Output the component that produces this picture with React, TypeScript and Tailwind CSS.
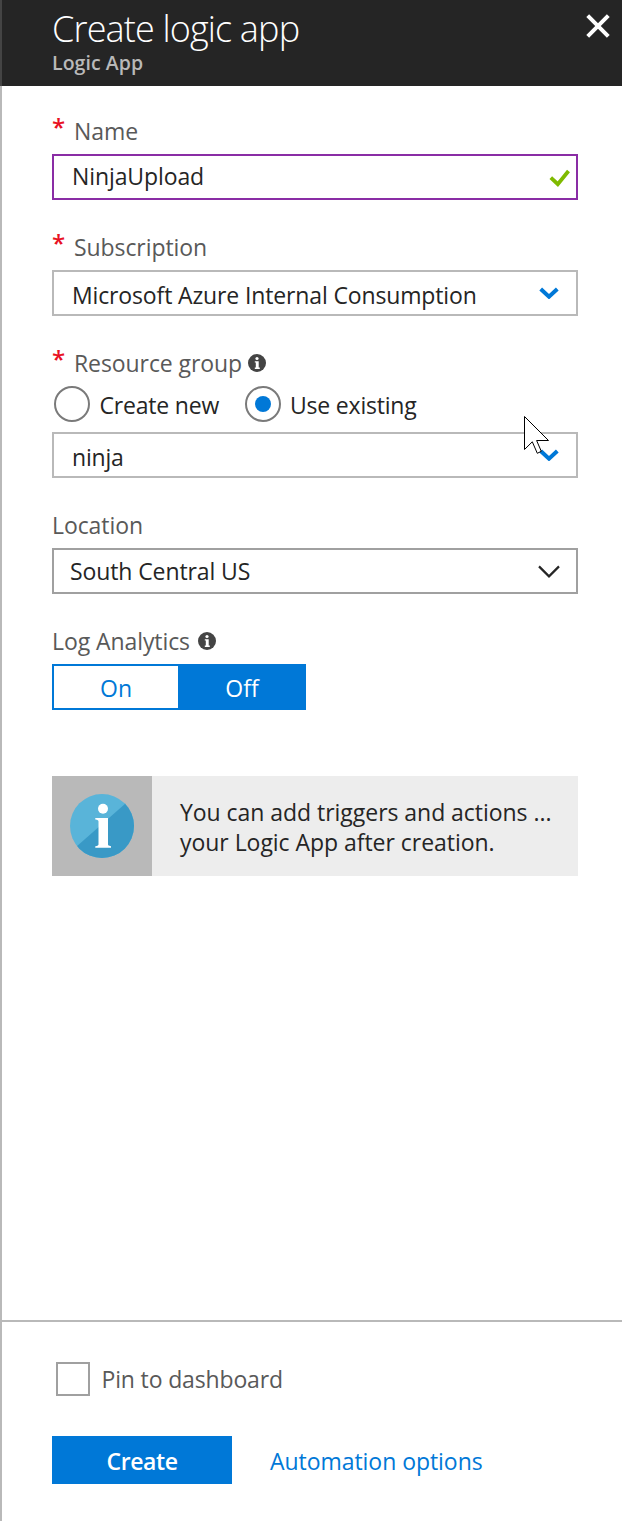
import type { ReactNode } from "react";

function Label({ children, required = false, info = false }: { children: ReactNode; required?: boolean; info?: boolean }) {
  return (
    <div className="mb-2 flex h-[30px] items-center text-[#595959]">
      {required && (
        <span className="w-[22px] shrink-0 pb-[9px] text-[24px] font-semibold leading-[30px] text-[#e81123]">*</span>
      )}
      <span className="whitespace-nowrap tracking-[-0.08px]">{children}</span>
      {info && <InfoDot wide={!required} />}
    </div>
  );
}

function InfoDot({ wide }: { wide: boolean }) {
  return (
    <svg className={wide ? "ml-[8px] size-[18px] shrink-0" : "ml-[5.5px] size-[18px] shrink-0"} viewBox="0 0 18 18">
      <circle cx="9" cy="9" r="9" fill="#444" />
      <circle cx="9" cy="4.5" r="1.6" fill="#fff" />
      <path d="M6.8 7.2h3.9v6.2h1.1v1.5H6.8v-1.5h1V8.6h-1z" fill="#fff" />
    </svg>
  );
}

function BlueChevron() {
  return (
    <svg className="h-[12px] w-[20px] shrink-0" viewBox="0 0 20 12" fill="none">
      <path d="M1.7 2 10 9.7l8.3-7.7" stroke="#0078d7" strokeWidth="4" />
    </svg>
  );
}

function Radio({ label, checked = false }: { label: string; checked?: boolean }) {
  return (
    <div className="flex items-center">
      <div className="flex size-9 items-center justify-center rounded-full border-2 border-[#7a7a7a]">
        {checked && <div className="size-4 rounded-full bg-[#0078d7]" />}
      </div>
      <span className="ml-[9.5px] whitespace-nowrap pt-[2px] tracking-[-0.2px]">{label}</span>
    </div>
  );
}

export default function App() {
  return (
    <div className="relative flex h-[1521px] w-[622px] flex-col bg-white font-['Open_Sans',sans-serif] text-[23px] leading-[30px] text-[#252525]">
      <header className="flex h-[86px] shrink-0 justify-between border-l-2 border-[#444] bg-[#252525] pl-[50px] pr-3">
        <div className="pt-[7px]">
          <h1 className="whitespace-nowrap text-[36px] font-light leading-[44px] tracking-[-0.85px] text-white">Create logic app</h1>
          <p className="mt-[2px] text-[19.5px] font-semibold leading-[20px] tracking-[0.05px] text-[#b9b9b9]">Logic App</p>
        </div>
        <svg className="mt-[14px] size-6" viewBox="0 0 24 24" fill="none">
          <path d="M1.7 1.7 22.3 22.3M22.3 1.7 1.7 22.3" stroke="#fff" strokeWidth="4" />
        </svg>
      </header>

      <main className="flex grow flex-col border-l-2 border-[#b9b9b9] pl-[50px] pr-[44px] pt-[30px]">
        <Label required>Name</Label>
        <div className="flex h-[46px] items-center justify-between border-2 border-[#8a2da5] pl-[18px] pr-[6px]">
          <span className="pb-[2px] tracking-[-0.1px]">NinjaUpload</span>
          <svg className="mt-[2px] h-[18px] w-[21px]" viewBox="0 0 21 18" fill="none">
            <path d="M1.8 8.6 8.8 15.2 19.5 2" stroke="#7fba00" strokeWidth="3.8" />
          </svg>
        </div>

        <div className="mt-8">
          <Label required>Subscription</Label>
        </div>
        <div className="flex h-[46px] items-center justify-between border-2 border-[#b9b9b9] pl-[18px] pr-[17px]">
          <span className="whitespace-nowrap pt-[4px] tracking-[-0.14px]">Microsoft Azure Internal Consumption</span>
          <BlueChevron />
        </div>

        <div className="mt-8">
          <Label required info>Resource group</Label>
        </div>
        <div className="mb-[10px] flex h-9 gap-[25.5px] pl-[2px]">
          <Radio label="Create new" />
          <Radio label="Use existing" checked />
        </div>
        <div className="flex h-[46px] items-center justify-between border-2 border-[#b9b9b9] pl-[18px] pr-[17px]">
          <span className="pt-[4px] tracking-[-0.2px]">ninja</span>
          <BlueChevron />
        </div>

        <div className="mt-8">
          <Label>Location</Label>
        </div>
        <div className="flex h-[46px] items-center justify-between border-2 border-[#a0a0a0] pl-4 pr-4">
          <span className="tracking-[-0.1px]">South Central US</span>
          <svg className="h-[14px] w-[22px]" viewBox="0 0 22 14" fill="none">
            <path d="M1 2.4 11 12.4 21 2.4" stroke="#252525" strokeWidth="2.2" />
          </svg>
        </div>

        <div className="mt-8">
          <Label info>Log Analytics</Label>
        </div>
        <div className="flex h-[46px] w-[254px] border-2 border-[#0078d7] text-center leading-[44px]">
          <div className="w-[124px] text-[#0078d7]">On</div>
          <div className="grow bg-[#0078d7] pl-[2px] text-white">Off</div>
        </div>

        <div className="mt-[66px] flex h-[100px] bg-[#ededed]">
          <div className="flex w-[100px] shrink-0 items-center justify-center bg-[#b9b9b9]">
            <svg className="size-16" viewBox="0 0 64 64">
              <defs>
                <clipPath id="lower-right">
                  <path d="M0 58.3 64 2V64H0Z" />
                </clipPath>
              </defs>
              <circle cx="32" cy="32" r="32" fill="#59b4d9" />
              <circle cx="32" cy="32" r="32" fill="#3999c6" clipPath="url(#lower-right)" />
              <circle cx="33" cy="14.8" r="5" fill="#fff" />
              <path d="M25.3 24H38v26.2c0 1 .6 1.4 3 2.1V53.7H25.3v-1.4c2.5-.6 3.2-1.1 3.2-2.1V27.5c0-1.2-.8-1.8-3.2-2.1z" fill="#fff" />
            </svg>
          </div>
          <p className="whitespace-nowrap pl-7 pt-[21px] tracking-[-0.04px]">
            You can add triggers and actions ...
            <br />
            your Logic App after creation.
          </p>
        </div>
      </main>

      <footer className="flex h-[201px] shrink-0 flex-col border-l-2 border-[#b9b9b9]">
        <div className="h-[2px] shrink-0 bg-[#b9b9b9]" />
        <div className="mt-10 flex h-[34px] items-center pl-[54px] text-[#595959]">
          <div className="size-[34px] border-2 border-[#a0a0a0]" />
          <span className="ml-[11.5px] tracking-[-0.15px]">Pin to dashboard</span>
        </div>
        <div className="mt-10 flex h-12 pl-[50px] leading-[50px]">
          <button className="w-[180px] bg-[#0078d7] font-semibold tracking-[-0.4px] text-white">
            Create
          </button>
          <span className="ml-[38px] tracking-[-0.05px] text-[#0078d7]">Automation options</span>
        </div>
      </footer>

      <svg className="absolute left-[523px] top-[415px] h-[40px] w-[28px]" viewBox="0 0 28 40">
        <path d="M1.5 1.5V34.5L9.3 26.8 14.3 38.3 18.3 36.3 13.6 25.5H25.5Z" fill="#fff" stroke="#000" strokeWidth="1" />
      </svg>
    </div>
  );
}
